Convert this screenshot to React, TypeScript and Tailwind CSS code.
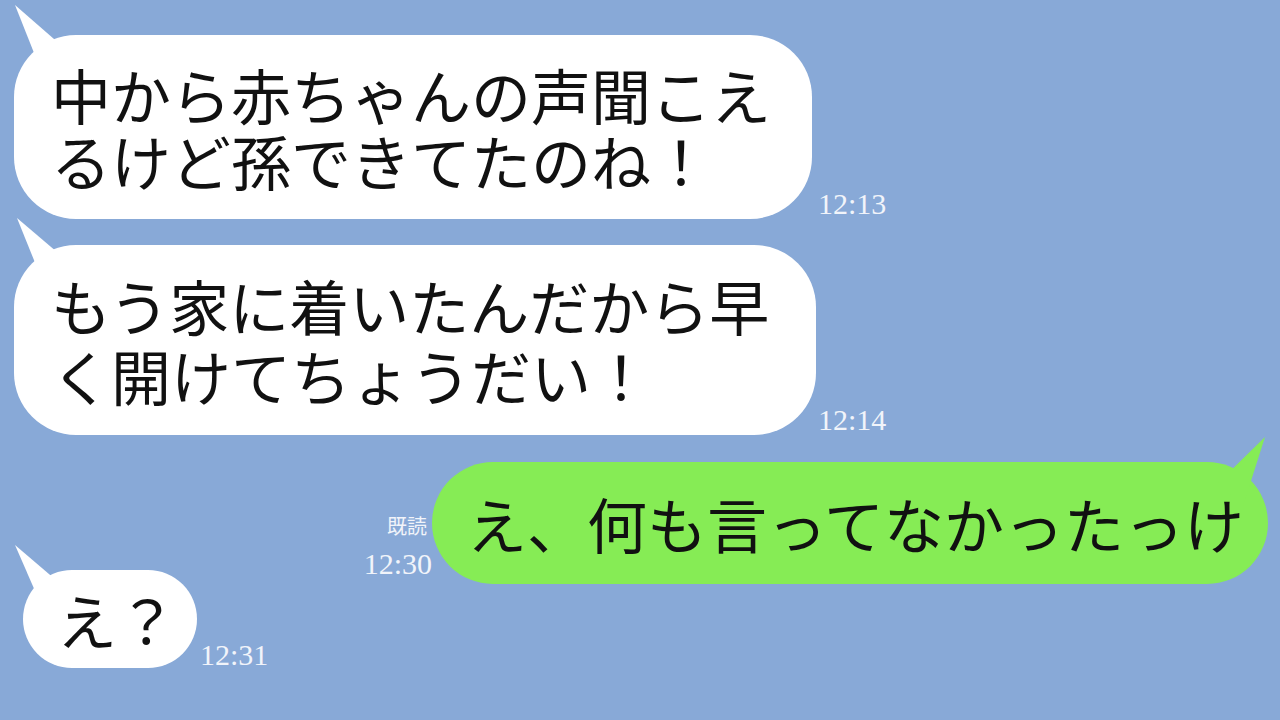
const jp = { fontFamily: '"Noto Sans CJK JP", "Noto Sans", sans-serif' }

function Time({ children }: { children: string }) {
  return (
    <span className="block text-[30px] leading-none text-[#f1f4fa] font-['Liberation_Serif',serif] whitespace-nowrap">
      {children}
    </span>
  )
}

export default function App() {
  return (
    <div className="w-[1280px] h-[720px] overflow-hidden bg-[#88a9d7] text-[#111]" style={jp}>
      {/* 1 */}
      <div className="flex items-end ml-[14px] pt-[35px]">
        <div className="relative w-[798px] rounded-[62px] bg-white pl-[37px] pt-[26px] pb-[26px] text-[60px] leading-[66px] whitespace-nowrap">
          <svg className="absolute left-0 top-[-30px]" width="50" height="64" viewBox="0 0 50 64">
            <polygon points="1,0 48,41 26,63" fill="#fff" />
          </svg>
          中から赤ちゃんの声聞こえ
          <br />
          るけど孫できてたのね！
        </div>
        <div className="ml-[6px]">
          <Time>12:13</Time>
        </div>
      </div>

      {/* 2 */}
      <div className="flex items-end ml-[14px] mt-[26px]">
        <div className="relative w-[802px] rounded-[62px] bg-white pl-[37px] pt-[25px] pb-[25px] text-[60px] leading-[70px] whitespace-nowrap">
          <svg className="absolute left-0 top-[-27px]" width="52" height="64" viewBox="0 0 52 64">
            <polygon points="3,0 50,40 28,62" fill="#fff" />
          </svg>
          もう家に着いたんだから早
          <br />
          く開けてちょうだい！
        </div>
        <div className="ml-[2px]">
          <Time>12:14</Time>
        </div>
      </div>

      {/* 3 */}
      <div className="flex items-end justify-end pr-[12px] mt-[27px]">
        <div className="flex flex-col items-end mb-[5px]">
          <span className="block text-[20px] leading-none text-[#f1f4fa] mr-[5px]">既読</span>
          <div className="mt-[13px]">
            <Time>12:30</Time>
          </div>
        </div>
        <div className="relative flex items-center w-[836px] h-[122px] rounded-[61px] bg-[#86ec55] pl-[35px] text-[60px] leading-[66px] whitespace-nowrap">
          <svg className="absolute right-[-5px] top-[-27px]" width="60" height="75" viewBox="0 0 60 75">
            <polygon points="52,2 30,71 5,48" fill="#86ec55" />
          </svg>
          え、何も言ってなかったっけ
        </div>
      </div>

      {/* 4 */}
      <div className="flex items-end ml-[23px] mt-[-14px]">
        <div className="relative flex items-center w-[174px] h-[98px] rounded-full bg-white pl-[34px] text-[60px] leading-[66px] whitespace-nowrap">
          <svg className="absolute left-[-10px] top-[-25px]" width="52" height="58" viewBox="0 0 52 58">
            <polygon points="2,0 50,41 26,55" fill="#fff" />
          </svg>
          え？
        </div>
        <div className="ml-[3px] mb-[-2px]">
          <Time>12:31</Time>
        </div>
      </div>
    </div>
  )
}
